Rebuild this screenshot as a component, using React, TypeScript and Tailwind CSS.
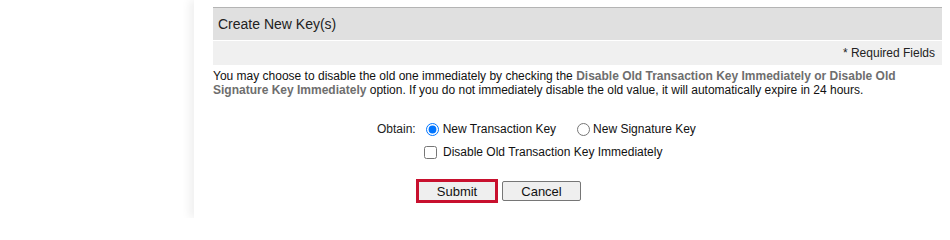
export default function App() {
  return (
    <div className="flex w-[950px] h-[218px] bg-white overflow-hidden font-['Liberation_Sans',Arial,sans-serif] text-[12px] text-[#111]">
      {/* left column */}
      <div className="w-[194px] shrink-0 bg-white" />

      {/* main panel */}
      <div className="flex-1 bg-white pl-[19px] pr-[8px] pt-[7px] shadow-[-5px_0_8px_rgba(0,0,0,0.06)]">
        <div className="border-t border-[#b4b4b4] bg-[#e0e0e0] h-[33px] pl-[5px] flex items-center text-[14px] text-[#222]">
          Create New Key(s)
        </div>
        <div className="mt-px bg-[#f0f0f0] h-[24px] pr-[7px] flex items-center justify-end text-[#222]">
          * Required Fields
        </div>

        <p className="mt-[4px] leading-[14px]">
          You may choose to disable the old one immediately by checking the{" "}
          <b className="text-[#6e6e6e]">
            Disable Old Transaction Key Immediately or Disable Old Signature Key Immediately
          </b>{" "}
          option. If you do not immediately disable the old value, it will automatically expire in 24 hours.
        </p>

        <div className="mt-[25px] pl-[164px] flex items-center h-[14px]">
          <span className="text-[#222]">Obtain:</span>
          <input
            type="radio"
            name="obtain"
            defaultChecked
            className="w-[13px] h-[13px] m-0 ml-[10px] mr-[4px] accent-[#0075ff]"
          />
          <span>New Transaction Key</span>
          <input
            type="radio"
            name="obtain"
            className="w-[13px] h-[13px] m-0 ml-[21px] mr-[3px]"
          />
          <span>New Signature Key</span>
        </div>

        <div className="mt-[9px] pl-[211px] flex items-center h-[14px]">
          <input type="checkbox" className="w-[13px] h-[13px] m-0 mr-[6px]" />
          <span>Disable Old Transaction Key Immediately</span>
        </div>

        <div className="mt-[20px] pl-[203px] flex items-center gap-[4px]">
          <button className="w-[82px] h-[24px] border-[3px] border-[#c8102e] bg-[#efefef] text-[13px] text-[#111] leading-none">
            Submit
          </button>
          <button className="w-[79px] h-[20px] border border-[#767676] rounded-[2px] bg-[#efefef] text-[13px] text-[#111] leading-none">
            Cancel
          </button>
        </div>
      </div>
    </div>
  );
}
